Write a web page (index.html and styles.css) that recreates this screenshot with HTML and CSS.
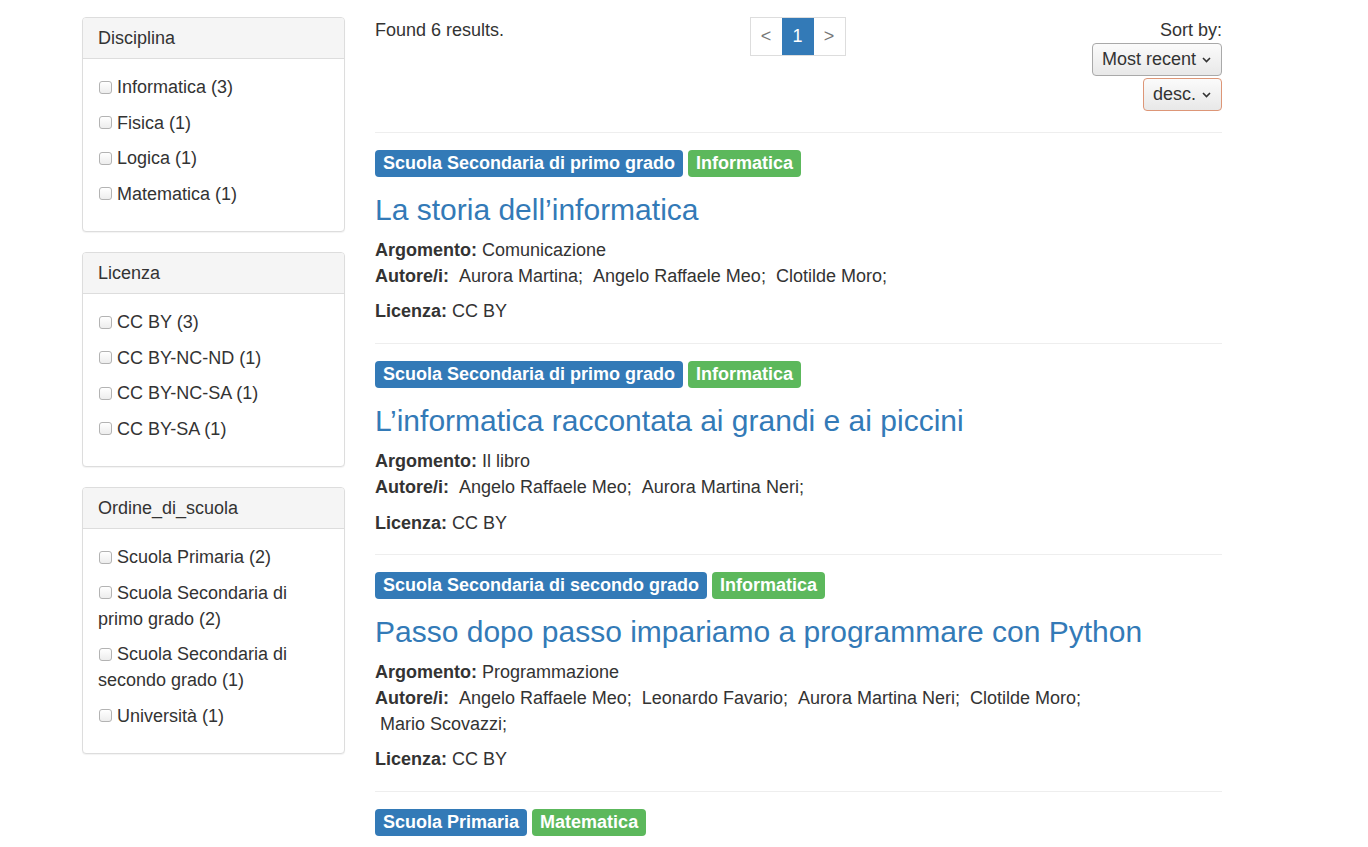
FILE: index.html
```html
<!DOCTYPE html>
<html lang="it">
<head>
<meta charset="utf-8">
<title>Risultati</title>
<link rel="stylesheet" href="styles.css">
</head>
<body>
<div class="page">
  <aside class="sidebar">
    <section class="panel">
      <div class="panel-heading">Disciplina</div>
      <div class="panel-body">
        <label class="facet"><input type="checkbox">Informatica (3)</label>
        <label class="facet"><input type="checkbox">Fisica (1)</label>
        <label class="facet"><input type="checkbox">Logica (1)</label>
        <label class="facet"><input type="checkbox">Matematica (1)</label>
      </div>
    </section>
    <section class="panel">
      <div class="panel-heading">Licenza</div>
      <div class="panel-body">
        <label class="facet"><input type="checkbox">CC BY (3)</label>
        <label class="facet"><input type="checkbox">CC BY-NC-ND (1)</label>
        <label class="facet"><input type="checkbox">CC BY-NC-SA (1)</label>
        <label class="facet"><input type="checkbox">CC BY-SA (1)</label>
      </div>
    </section>
    <section class="panel">
      <div class="panel-heading">Ordine_di_scuola</div>
      <div class="panel-body">
        <label class="facet"><input type="checkbox">Scuola Primaria (2)</label>
        <label class="facet"><input type="checkbox">Scuola Secondaria di primo grado (2)</label>
        <label class="facet"><input type="checkbox">Scuola Secondaria di secondo grado (1)</label>
        <label class="facet"><input type="checkbox">Università (1)</label>
      </div>
    </section>
  </aside>

  <main class="results">
    <div class="toolbar">
      <div class="found">Found 6 results.</div>
      <nav class="pager">
        <span class="pg">&lt;</span>
        <span class="pg active">1</span>
        <span class="pg">&gt;</span>
      </nav>
      <div class="sort">
        <div class="sort-label">Sort by:</div>
        <div class="select">Most recent<svg class="chev" viewBox="0 0 9 6" width="9" height="6"><path d="M1 1 L4.5 4.5 L8 1" fill="none" stroke="#333" stroke-width="1.6"/></svg></div>
        <div class="select focus">desc.<svg class="chev" viewBox="0 0 9 6" width="9" height="6"><path d="M1 1 L4.5 4.5 L8 1" fill="none" stroke="#333" stroke-width="1.6"/></svg></div>
      </div>
    </div>

    <hr class="sep first">
    <article class="item">
      <div class="tags"><span class="tag blue">Scuola Secondaria di primo grado</span> <span class="tag green">Informatica</span></div>
      <h3 class="title">La storia dell’informatica</h3>
      <p class="meta"><b>Argomento:</b> Comunicazione<br><b>Autore/i:</b> <span class="au">&nbsp;Aurora Martina;</span> <span class="au">&nbsp;Angelo Raffaele Meo;</span> <span class="au">&nbsp;Clotilde Moro;</span></p>
      <p class="meta"><b>Licenza:</b> CC BY</p>
    </article>

    <hr class="sep">
    <article class="item">
      <div class="tags"><span class="tag blue">Scuola Secondaria di primo grado</span> <span class="tag green">Informatica</span></div>
      <h3 class="title">L’informatica raccontata ai grandi e ai piccini</h3>
      <p class="meta"><b>Argomento:</b> Il libro<br><b>Autore/i:</b> <span class="au">&nbsp;Angelo Raffaele Meo;</span> <span class="au">&nbsp;Aurora Martina Neri;</span></p>
      <p class="meta"><b>Licenza:</b> CC BY</p>
    </article>

    <hr class="sep">
    <article class="item">
      <div class="tags"><span class="tag blue">Scuola Secondaria di secondo grado</span> <span class="tag green">Informatica</span></div>
      <h3 class="title">Passo dopo passo impariamo a programmare con Python</h3>
      <p class="meta"><b>Argomento:</b> Programmazione<br><b>Autore/i:</b> <span class="au">&nbsp;Angelo Raffaele Meo;</span> <span class="au">&nbsp;Leonardo Favario;</span> <span class="au">&nbsp;Aurora Martina Neri;</span> <span class="au">&nbsp;Clotilde Moro;</span> <span class="au">&nbsp;Mario Scovazzi;</span></p>
      <p class="meta"><b>Licenza:</b> CC BY</p>
    </article>

    <hr class="sep">
    <article class="item">
      <div class="tags"><span class="tag blue">Scuola Primaria</span> <span class="tag green">Matematica</span></div>
    </article>
  </main>
</div>
</body>
</html>
```

FILE: styles.css
```css
html, body {
  margin: 0;
  padding: 0;
  background: #fff;
}

body {
  font-family: "Liberation Sans", Arial, Helvetica, sans-serif;
  font-size: 18px;
  line-height: 1.42857;
  color: #333;
}

.page {
  display: flex;
  align-items: flex-start;
  gap: 30px;
  padding: 17px 0 0 82px;
}

/* Sidebar */
.sidebar {
  width: 263px;
  flex: none;
}

.panel {
  border: 1px solid #ddd;
  border-radius: 4px;
  background: #fff;
  box-shadow: 0 1px 1px rgba(0, 0, 0, 0.05);
  margin-bottom: 20px;
  overflow: hidden;
}

.panel-heading {
  background: #f5f5f5;
  border-bottom: 1px solid #ddd;
  padding: 7px 15px;
  line-height: 26px;
  color: #333;
}

.panel-body {
  padding: 15px 15px 15px;
}

.facet {
  display: block;
  line-height: 26px;
  margin-bottom: 9.5px;
  font-weight: normal;
}

.facet input {
  -webkit-appearance: none;
  appearance: none;
  box-sizing: border-box;
  width: 13px;
  height: 13px;
  margin: 0 5px 0 1px;
  padding: 0;
  border: 1px solid #b3b3b3;
  border-radius: 3px;
  background: linear-gradient(#fff, #ededed);
  vertical-align: middle;
  position: relative;
  top: -1px;
}

/* Results */
.results {
  width: 847px;
  flex: none;
}

.toolbar {
  display: grid;
  grid-template-columns: 1fr auto 1fr;
  align-items: start;
}

.found {
  line-height: 26px;
}

.pager {
  display: flex;
  border: 1px solid #ddd;
  height: 37px;
  margin-left: -2px;
}

.pg {
  width: 31px;
  line-height: 37px;
  text-align: center;
  color: #777;
  font-size: 18px;
}

.pg.active {
  width: 32px;
  background: #337ab7;
  color: #fff;
}

.sort {
  justify-self: end;
  display: flex;
  flex-direction: column;
  align-items: flex-end;
}

.sort-label {
  line-height: 26px;
}

.select {
  display: inline-flex;
  align-items: center;
  box-sizing: border-box;
  height: 33px;
  padding: 0 10px 0 9px;
  border: 1px solid #a9a9a9;
  border-radius: 4px;
  background: linear-gradient(#fbfbfb, #e8e8e8);
  color: #333;
  margin-bottom: 2px;
}

.select.focus {
  border-color: #dd9677;
}

.chev {
  margin-left: 6px;
  margin-top: 1px;
}

.sep {
  border: 0;
  border-top: 1px solid #eee;
  margin: 0;
  height: 0;
}

.sep.first {
  margin-top: 19px;
}

.item {
  padding: 17px 0 18px;
}

.tags {
  height: 27px;
  white-space: nowrap;
}

.tag {
  display: inline-block;
  font-size: 18px;
  font-weight: bold;
  line-height: 19px;
  padding: 4px 8px 4px;
  border-radius: 4px;
  color: #fff;
}

.tag.blue {
  background: #337ab7;
}

.tag.green {
  background: #5cb85c;
}

.title {
  margin: 16px 0 12px;
  font-size: 30px;
  line-height: 33px;
  font-weight: normal;
  color: #337ab7;
}

.meta {
  margin: 0 0 10px;
  max-width: 800px;
}

.meta:last-child {
  margin-bottom: 0;
}

.au {
  white-space: nowrap;
}
```
